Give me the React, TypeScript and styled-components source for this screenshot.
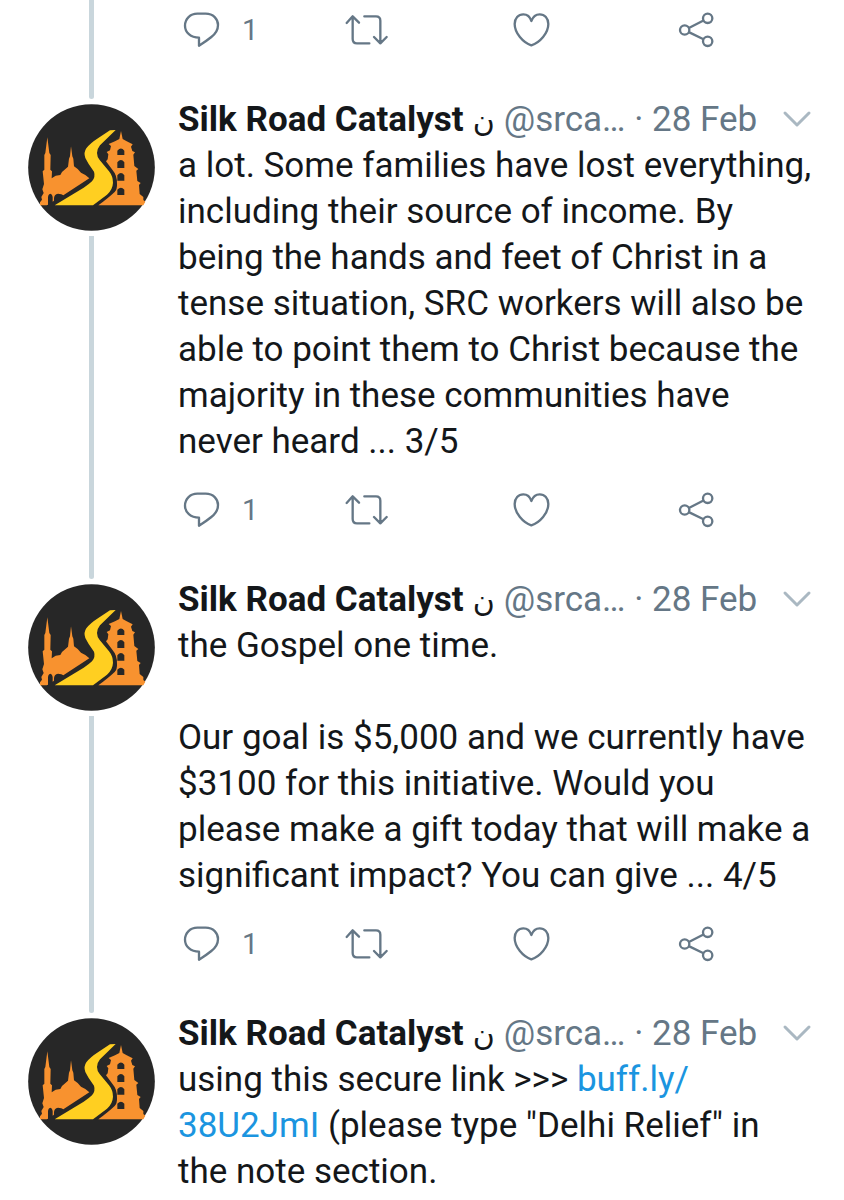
import React from "react";
import styled, { createGlobalStyle } from "styled-components";

const GlobalStyle = createGlobalStyle`
  *, *::before, *::after { box-sizing: border-box; }
  body {
    margin: 0;
    background: #ffffff;
    color: #14171a;
    font-family: Roboto, "DejaVu Sans", sans-serif;
  }
`;

const Thread = styled.main`
  display: flex;
  flex-direction: column;
  width: 100%;
  padding-bottom: 24px;
  overflow-x: hidden;
`;

const Post = styled.article`
  display: grid;
  grid-template-columns: 127px minmax(0, 1fr);
  column-gap: 23px;
  padding: 0 6px 0 28px;
`;

const Rail = styled.div<{ $continued?: boolean }>`
  display: flex;
  flex-direction: column;
  align-items: center;
  gap: 5px;
  padding-top: ${(p) => (p.$continued ? "0" : "8px")};
`;

const ThreadLine = styled.div`
  flex: 1;
  width: 5px;
  margin-bottom: -3px;
  border-radius: 0 0 3px 3px;
  background: #c9d6dc;
`;

const AvatarLink = styled.a`
  display: block;
  width: 127px;
  height: 127px;

  svg { display: block; width: 100%; height: 100%; }
`;

const Content = styled.div`
  padding-top: 1px;
`;

const Header = styled.header`
  display: flex;
  align-items: baseline;
  height: 46px;
  padding-right: 22px;
  font-size: 35px;
  line-height: 46px;
  white-space: nowrap;
`;

const Name = styled.span`
  font-weight: 700;
`;

const Nun = styled.span`
  margin-left: 9px;
  font-family: "DejaVu Sans", sans-serif;
  font-size: 30px;
`;

const Meta = styled.span`
  margin-left: 9px;
  color: #657786;
`;

const MenuButton = styled.button`
  display: flex;
  flex: none;
  align-self: center;
  width: 36px;
  height: 36px;
  margin-left: auto;
  padding: 0;
  border: 0;
  background: none;

  svg { width: 100%; height: 100%; }
`;

const Body = styled.p`
  margin: 0;
  padding-right: 22px;
  font-size: 35px;
  line-height: 46px;
  white-space: pre-line;
`;

const TextLink = styled.a`
  color: #1b95e0;
  text-decoration: none;
`;

const Actions = styled.div<{ $continued?: boolean }>`
  display: grid;
  grid-template-columns: repeat(4, 1fr);
  padding: ${(p) => (p.$continued ? "7px" : "22px")} 0 43px;
`;

const ActionButton = styled.button`
  display: flex;
  align-items: center;
  gap: 18px;
  height: 46px;
  padding: 0;
  border: 0;
  background: none;
  color: #657786;
  font-family: inherit;
  font-size: 29px;
  line-height: 46px;

  svg { width: 46px; height: 46px; }
`;

const Icon = ({ children }: { children: React.ReactNode }) => (
  <svg
    viewBox="0 0 138 138"
    fill="none"
    stroke="currentColor"
    strokeWidth="7"
    strokeLinecap="round"
    strokeLinejoin="round"
    aria-hidden="true"
  >
    {children}
  </svg>
);

const Logo = () => (
  <svg viewBox="24 27 381 381" aria-hidden="true">
    <circle cx="214.500" cy="217.500" r="190" fill="#272727" />
    <path
      fill="#f8922f"
      d="M60 331 V322 L66 314 L64 306 L71 294 L67 283 L72 267 L68 229 L73 224 V180 L76 174 L82 127 L88 174 L92 180 L91 224 L96 229 L95 250 L107 242 L121 240 L126 231 L144 215 L147 191 L150 184 L153 154 L157 184 L160 191 L162 214 L173 222 L183 233 L196 240 L208 250 L130 301 Q126 296 114 296 Q102 298 102 310 V317 L98 320 V306 Q97 297 91 296 Q84 298 84 308 V329 L80 331 Z"
    />
    <path
      fill="#f8922f"
      fillRule="evenodd"
      d="M235 331 Q266 308 284 291 Q292 282 291 267 Q292 241 277 224 L258 199 L263 193 L265 178 L260 171 L270 166 L273 153 L266 147 L285 139 L298 132 L303 108 L308 132 L320 139 L338 148 L333 155 L337 168 L345 172 L340 179 L343 213 L355 222 L349 227 L352 258 L362 264 L357 270 L359 297 L370 306 V315 L376 320 L370 331 Z
      M292 180 V167 Q303 154 313 167 V180 Z
      M292 219 V202 Q303 188 313 202 V219 Z
      M292 257 V241 Q303 227 313 241 V257 Z
      M292 300 V284 Q303 272 313 284 V300 Z"
    />
    <path
      fill="#ffcf21"
      d="M287 105 L270 106 L235 129 Q210 145 199 160 Q190 173 196 189 L206 207 L222 230 Q227 246 216 259 Q208 267 191 278 L104 331 H219 L261 299 Q278 284 279 263 Q279 244 267 229 L239 195 Q231 185 231 174 Q231 162 240 151 Z"
    />
  </svg>
);

const PostActions = ({ replies, continued }: { replies: number; continued?: boolean }) => (
  <Actions $continued={continued}>
    <ActionButton type="button" aria-label={`Reply, ${replies}`}>
      <Icon>
        <path d="M63 92 C38 92 21 76 21 56 C21 35 37 20 58 20 H83 C106 20 120 36 120 54 C120 69 113 80 100 90 C89 99 76 108 63 116 Z" />
      </Icon>
      {replies}
    </ActionButton>
    <ActionButton type="button" aria-label="Retweet">
      <Icon>
        <path d="M29 28 V96 Q29 109 42 109 H79 M11 48 L29 28 L48 47 M64 28 H99 Q112 28 112 41 V109 M93 90 L112 109 L131 90" />
      </Icon>
    </ActionButton>
    <ActionButton type="button" aria-label="Like">
      <Icon>
        <path d="M70 42 C66 29 57 22 46 22 C31 22 20 34 20 51 C20 78 45 107 70 115 C96 107 121 78 121 51 C121 34 110 22 95 22 C84 22 75 29 70 42 Z" />
      </Icon>
    </ActionButton>
    <ActionButton type="button" aria-label="Share">
      <Icon>
        <circle cx="35" cy="69" r="14" />
        <circle cx="104" cy="34" r="14" />
        <circle cx="104" cy="103" r="14" />
        <path d="M49 62 L90 41 M49 76 L90 96" />
      </Icon>
    </ActionButton>
  </Actions>
);

interface TweetProps {
  children: React.ReactNode;
  replies?: number;
}

const Tweet = ({ children, replies }: TweetProps) => (
  <Post>
    <Rail>
      <AvatarLink href="#profile" aria-label="Silk Road Catalyst">
        <Logo />
      </AvatarLink>
      {replies !== undefined && <ThreadLine />}
    </Rail>
    <Content>
      <Header>
        <Name>Silk Road Catalyst</Name>
        <Nun lang="ar">ن</Nun>
        <Meta>@srca… · 28 Feb</Meta>
        <MenuButton type="button" aria-label="More options">
          <svg viewBox="0 0 36 36" fill="none" stroke="#aab8c2" strokeWidth="3" strokeLinecap="round" strokeLinejoin="round">
            <path d="M5 11 L17 23 L29 11" />
          </svg>
        </MenuButton>
      </Header>
      <Body>{children}</Body>
      {replies !== undefined && <PostActions replies={replies} />}
    </Content>
  </Post>
);

export default function App() {
  return (
    <>
      <GlobalStyle />
      <Thread>
        <Post>
          <Rail $continued>
            <ThreadLine />
          </Rail>
          <PostActions replies={1} continued />
        </Post>
        <Tweet replies={1}>
          a lot. Some families have lost everything, including their source of income. By being the
          hands and feet of Christ in a tense situation, SRC workers will also be able to point them
          to Christ because the majority in these communities have never heard ... 3/5
        </Tweet>
        <Tweet replies={1}>
          {"the Gospel one time.\n\nOur goal is $5,000 and we currently have $3100 for this initiative. Would you please make a gift today that will make a significant impact? You can give ... 4/5"}
        </Tweet>
        <Tweet>
          using this secure link &gt;&gt;&gt;{" "}
          <TextLink href="#link">
            buff.ly/
            <wbr />
            38U2JmI
          </TextLink>{" "}
          (please type "Delhi Relief" in the note section.
        </Tweet>
      </Thread>
    </>
  );
}
